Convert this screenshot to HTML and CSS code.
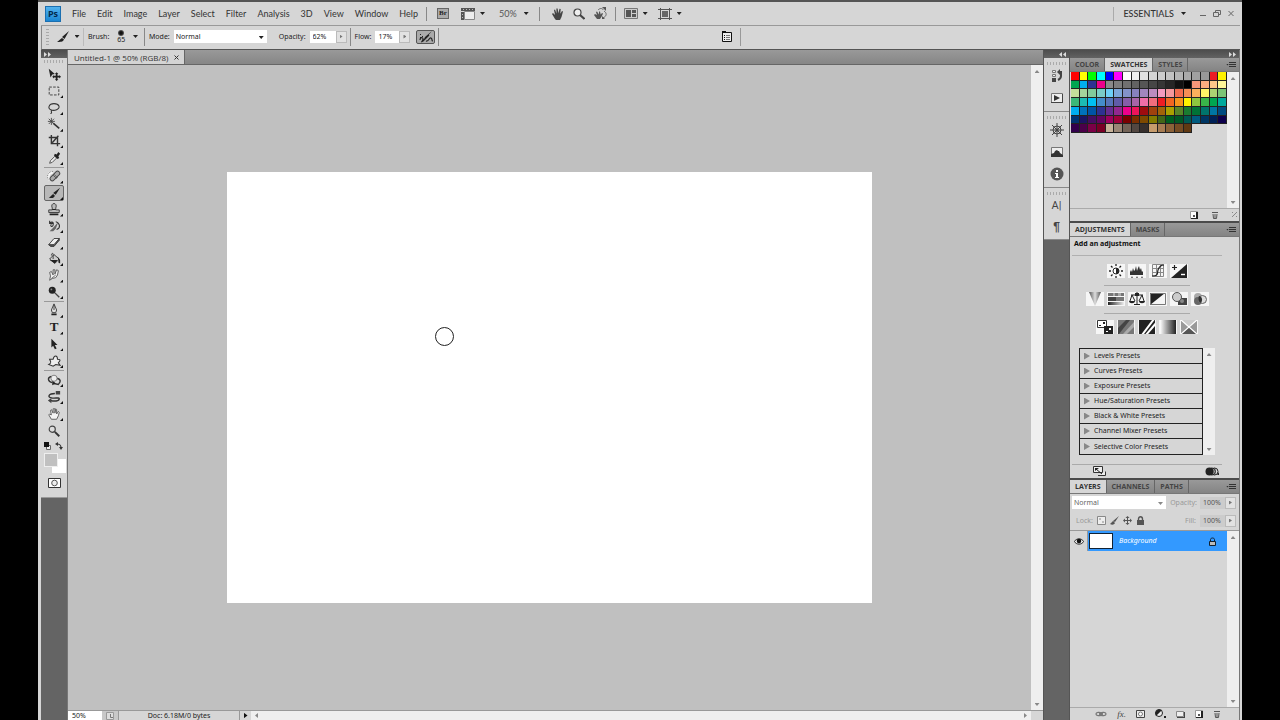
FILE: index.html
```html
<!DOCTYPE html>
<html lang="en">
<head>
<meta charset="utf-8">
<title>Untitled-1 @ 50% (RGB/8)</title>
<link rel="stylesheet" href="styles.css">
</head>
<body>
<div class="app">
  <header class="menubar">
    <span class="logo">Ps</span>
    <nav class="menus" aria-label="Main menu">
      <button>File</button><button>Edit</button><button>Image</button><button>Layer</button><button>Select</button><button>Filter</button><button>Analysis</button><button>3D</button><button>View</button><button>Window</button><button>Help</button>
    </nav>
    <div class="apptools">
      <button class="bridge" aria-label="Launch Bridge">Br</button>
      <button class="drop" aria-label="View extras"><svg width="14" height="12" viewBox="0 0 14 12"><path fill="#eee" stroke="#888" d="M3.500 3.500h10v8h-10z"/><path fill="#555" d="M0 0h14v3H0zM0 4h3v8H0z"/><path fill="#bbb" d="M2 1h1v1H2zM5 1h1v1H5zM8 1h1v1H8zM11 1h1v1h-1zM1 6h1v1H1zM1 9h1v1H1z"/></svg><i class="caret"></i></button>
      <button class="drop zoomlevel">50%<i class="caret"></i></button>
    </div>
    <div class="apptools views">
      <button aria-label="Hand"><svg width="12" height="12" viewBox="0 0 12 12"><path fill="#444" d="M3 11 0 6l1-1 2 2L2 2l1-.6 1.500 4L4.400.6 5.600.4l.8 4.800L7.500.8l1.200.3-.4 4.600L10 3l1 .6L9.500 9 8 12H4z"/></svg></button>
      <button aria-label="Zoom"><svg width="12" height="12" viewBox="0 0 12 12"><circle cx="4.500" cy="4.500" r="3.500" fill="#eee" stroke="#444" stroke-width="1.200"/><path stroke="#444" stroke-width="2.200" d="m7 7 4.500 4"/></svg></button>
      <button aria-label="Rotate view"><svg width="13" height="13" viewBox="0 0 13 13"><path fill="#555" d="M3 12 0 8l1-1 2 1-1-3 1-.5 2 3 0-3 1 0 .7 3L8 6l1 .5L8 9l-2 3z"/><path fill="none" stroke="#666" d="M4 3C6 1 8 1 9.500 3M10 4c3 2 3 5-1 7"/><path fill="#555" d="M8 0h4v4zM8 9v3h3z"/></svg></button>
    </div>
    <div class="apptools arrange">
      <button class="drop" aria-label="Arrange documents"><svg width="14" height="11" viewBox="0 0 14 11"><path fill="#ccc" stroke="#777" d="M.5.5h13v10H.5z"/><path fill="#555" d="M2 2h5v7H2zM8 2h4v3H8zM8 6h4v3H8z"/></svg><i class="caret"></i></button>
      <button class="drop" aria-label="Screen mode"><svg width="14" height="12" viewBox="0 0 14 12"><path fill="#666" d="M4 3h6v6H4z"/><path fill="none" stroke="#555" d="M2.500 0v12M11.500 0v12M0 1.500h14M0 10.500h14"/></svg><i class="caret"></i></button>
    </div>
    <button class="drop workspace">ESSENTIALS<i class="caret"></i></button>
    <div class="winctl">
      <button aria-label="Minimize"><svg width="8" height="8" viewBox="0 0 8 8"><path stroke="#666" d="M1 5.500h6"/></svg></button>
      <button aria-label="Restore"><svg width="8" height="8" viewBox="0 0 8 8"><path fill="none" stroke="#666" d="M2.500 2V.5h5v4H6M.5 2.500h5v4h-5z"/></svg></button>
      <button aria-label="Close"><svg width="8" height="8" viewBox="0 0 8 8"><path stroke="#666" d="m1.500 1 5 5m0-5-5 5"/></svg></button>
    </div>
  </header>

  <section class="options" aria-label="Brush options">
    <i class="grip"></i>
    <button class="drop brushtool" aria-label="Brush tool presets"><svg width="13" height="12" viewBox="0 0 13 12"><path fill="#222" d="M12 0 7.500 8 5 6zM5 7l2 1.500C6 11 3 11 0 11c2-1 3-3 5-4z"/></svg><i class="caret"></i></button>
    <div class="opt brush"><span>Brush:</span><button class="tip" aria-label="Brush size"><i class="dot"></i>65</button><i class="caret"></i></div>
    <div class="opt mode"><label for="mode">Mode:</label><span class="pick"><select id="mode"><option>Normal</option></select></span></div>
    <div class="opt opacity"><label for="opacity">Opacity:</label><span class="num"><input id="opacity" value="62%"><button aria-label="Opacity slider"></button></span></div>
    <div class="opt flow"><label for="flow">Flow:</label><span class="num"><input id="flow" value="17%"><button aria-label="Flow slider"></button></span>
    <button class="air" aria-label="Airbrush"><svg width="16" height="12" viewBox="0 0 16 12"><path fill="none" stroke="#222" stroke-width="1.200" d="M2 9c0-3 3-3 3-1s-3 4 0 2l6-6M8 10c3 1 3-4 5-3s0 3 2 3"/><path fill="#222" d="M14 0 8 7 6 8l1-2zM2 3h1v1H2zM4 5h1v1H4zM2 6h1v1H2z"/></svg></button></div>
    <button class="palettes" aria-label="Toggle brushes panel"><svg width="11" height="11" viewBox="0 0 11 11"><path fill="#eee" stroke="#111" d="M.5 1.500h9v9h-9z"/><path fill="#111" d="M0 0h4v2H0zM2 4h1v1H2zM2 6h1v1H2zM2 8h1v1H2z"/><path stroke="#777" d="M4 4.500h4M4 6.500h4M4 8.500h4"/></svg></button>
  </section>

  <main class="body">
    <aside class="toolcol">
      <div class="colhead"><svg width="7" height="5" viewBox="0 0 7 5"><path fill="#ddd" d="M0 0l3 2.500L0 5zM4 0l3 2.500L4 5z"/></svg></div>
      <div class="tools">
        <i class="grip wide"></i>
        <div class="tgroup g6">
          <button class="plain" aria-label="Move"><svg viewBox="0 0 16 16"><path fill="#222" d="m2 2 7 6-3 .5L4 12zM11 6l2 2h-1v2h2V9l2 2-2 2v-1h-2v2h1l-2 2-2-2h1v-2H8v1l-2-2 2-2v1h2V8H9z"/></svg></button>
          <button aria-label="Marquee"><svg viewBox="0 0 16 16"><path fill="none" stroke="#333" stroke-dasharray="3 1.500" d="M2.500 3.500h11v9h-11z"/></svg></button>
          <button aria-label="Lasso"><svg viewBox="0 0 16 16"><path fill="none" stroke="#333" stroke-width="1.200" d="M5 10C0 9 2 3 8 3s8 5 3 7-7-1-6 2-1 2-1 2"/></svg></button>
          <button aria-label="Magic wand"><svg viewBox="0 0 16 16"><path stroke="#333" stroke-width="1.800" d="m7 7 7 6"/><path stroke="#444" d="M5 1v8M1 5h8M2 2l6 6M8 2 2 8"/></svg></button>
          <button aria-label="Crop"><svg viewBox="0 0 16 16"><path fill="none" stroke="#333" stroke-width="1.600" d="M5 1v10h10M2 4h10v10M6 10l7-8"/></svg></button>
          <button aria-label="Eyedropper"><svg viewBox="0 0 16 16"><path fill="#eee" stroke="#444" d="m3 14 1-3 5-5 2 2-5 5z"/><path fill="#222" d="m9 3 2 1 2-3 2 2-2 3 1 2-2 1-4-4z"/></svg></button>
        </div>
        <div class="tgroup g8">
          <button aria-label="Healing brush"><svg viewBox="0 0 16 16"><path fill="none" stroke="#f4f4f4" stroke-width="3" d="M7 4C2 3 0 9 3 13"/><path fill="none" stroke="#666" stroke-dasharray="1 1" d="M7 3C1 2-1 9 2 13"/><path stroke="#444" stroke-width="6" stroke-linecap="round" d="m6 11 6-6"/><path stroke="#aaa" stroke-width="4" stroke-linecap="round" d="m6 11 6-6"/><path stroke="#555" d="m7 7 4 4M8 6l4 4"/></svg></button>
          <button class="on" aria-label="Brush"><svg viewBox="0 0 16 16"><path fill="#222" d="m15 2-5 8-3-2zM7 9l2 2c-1 3-4 3-7 2 2 0 3-3 5-4z"/></svg></button>
          <button aria-label="Clone stamp"><svg viewBox="0 0 16 16"><path fill="#bbb" stroke="#333" d="M6 7c-3-7 7-7 4 0v2h4v3H2V9h4z"/><path fill="#222" d="M3 13h10v2H3zM6 8h4v1H6z"/></svg></button>
          <button aria-label="History brush"><svg viewBox="0 0 16 16"><path fill="#666" d="m13 3-3 8-3 3-4 0 4-4z"/><path fill="none" stroke="#333" stroke-width="1.200" d="M3 5c3-3 5-1 4 2s-4 1-2-1M3 2v3h4M10 3c5 2 6 7 1 9"/></svg></button>
          <button aria-label="Eraser"><svg viewBox="0 0 16 16"><path fill="#555" stroke="#333" d="m2 11 2 2h4l6-7V4z"/><path fill="#eee" stroke="#333" d="m2 11 6-7h6l-6 7z"/></svg></button>
          <button aria-label="Paint bucket"><svg viewBox="0 0 16 16"><path fill="#ccc" stroke="#333" d="m3 8 5-5 6 5-5 5z"/><path fill="none" stroke="#333" d="M7 8V2c-1-1-2 0-2 2"/><path fill="#222" d="m12 5 3 4v4l-2-1V9zM3 9h9l-3 4z"/></svg></button>
          <button aria-label="Smudge"><svg viewBox="0 0 16 16"><path fill="#eee" stroke="#555" d="M3 14 4 9 3 5l2-1 2 4V2h2v5l2-5 2 1-1 5-2 3-4 1z"/><path stroke="#666" d="m5 12 5-4"/></svg></button>
          <button aria-label="Burn"><svg viewBox="0 0 16 16"><circle cx="6" cy="6" r="4" fill="#222"/><circle cx="5" cy="5" r="1" fill="#888"/><path stroke="#444" stroke-width="1.600" d="m9 9 5 5"/></svg></button>
        </div>
        <div class="tgroup g4">
          <button aria-label="Pen"><svg viewBox="0 0 16 16"><path fill="#ddd" stroke="#333" d="M8 1 5 8l1 3h4l1-3zM8 2v6"/><path fill="#222" d="M5 12h6v2H5z"/></svg></button>
          <button class="type" aria-label="Type">T</button>
          <button aria-label="Path selection"><svg viewBox="0 0 16 16"><path fill="#222" d="m5 2 7 7-3 0 2 4-2 1-2-4-2 2z"/></svg></button>
          <button aria-label="Custom shape"><svg viewBox="0 0 16 16"><path fill="#eee" stroke="#333" stroke-width="1.200" d="M2 12c4-2 2-3 1-6l4 0c1-5 5-5 5 0 5 0 2 3 1 4l2 3-5-1-3 2z"/></svg></button>
        </div>
        <div class="tgroup g4 last">
          <button aria-label="3D rotate"><svg viewBox="0 0 16 16"><path fill="none" stroke="#333" stroke-width="1.600" d="M5 4C0 5 1 10 6 11M11 6c5 1 5 4 2 7l-5-1"/><path fill="#222" d="M6 8v6l4-2z"/><circle cx="8" cy="6" r="3.500" fill="#eee" stroke="#777"/></svg></button>
          <button aria-label="3D orbit"><svg viewBox="0 0 16 16"><path fill="none" stroke="#333" stroke-width="1.600" d="M9 4C2 4 0 8 5 9c4 1 9-1 9 1 0 3-6 3-10 2"/><path fill="#444" d="M10 1h5v4h-5zM5 9v6l-4-3z"/></svg></button>
          <button aria-label="Hand tool"><svg viewBox="0 0 16 16"><path fill="#f4f4f4" stroke="#555" d="M5 14 2 9l1-1 2 1-1-5 1-1 2 4V2h2v5l1-5 1 1v5l2-3 1 1-1 4-2 4z"/></svg></button>
          <button class="plain" aria-label="Zoom tool"><svg viewBox="0 0 16 16"><circle cx="6" cy="6" r="3.500" fill="#ddd" stroke="#444" stroke-width="1.300"/><path stroke="#333" stroke-width="2.200" d="m9 9 5 5"/></svg></button>
        </div>
        <div class="defaults"><svg width="7" height="8" viewBox="0 0 7 8"><path fill="#eee" stroke="#666" d="M2.500 3.500h4v4h-4z"/><path fill="#111" d="M0 0h5v5H0z"/></svg><svg width="8" height="8" viewBox="0 0 8 8"><path fill="none" stroke="#333" stroke-width="1.200" d="M2 2c3 0 4 1 4 4"/><path fill="#333" d="M3 0v4L0 2zM4 5h4L6 8z"/></svg></div>
        <div class="colors"><button class="fg" aria-label="Foreground color"></button><button class="bg" aria-label="Background color"></button></div>
        <button class="mask" aria-label="Quick mask"><svg width="13" height="10" viewBox="0 0 13 10"><path fill="#fff" stroke="#333" d="M.5.5h12v9H.5z"/><circle cx="6.500" cy="5" r="2.800" fill="#eee" stroke="#555"/></svg></button>
      </div>
    </aside>

    <section class="doc">
      <div class="doctabs"><div class="doctab">Untitled-1 @ 50% (RGB/8)<button aria-label="Close tab"><svg width="5" height="5" viewBox="0 0 5 5"><path stroke="#333" d="m.5.500 4 4m0-4-4 4"/></svg></button></div></div>
      <div class="view">
        <div class="stage"><div class="artboard"><i class="cursor"></i></div></div>
        <div class="vscroll"><i class="up"></i><i class="down"></i></div>
      </div>
      <footer class="status">
        <input aria-label="Zoom" value="50%">
        <span class="clock"><svg width="8" height="8" viewBox="0 0 8 8"><path fill="#ddd" stroke="#999" d="M.5.500h7v7h-7z"/><path fill="none" stroke="#777" d="M4.500 2v3.500H7"/></svg></span>
        <span class="info">Doc: 6.18M/0 bytes</span>
        <button class="more" aria-label="Status menu"></button>
        <div class="hscroll"><i class="lefta"></i><i class="righta"></i></div>
        <i class="corner"></i>
      </footer>
    </section>

    <aside class="dock">
      <div class="colhead end"><svg width="7" height="5" viewBox="0 0 7 5"><path fill="#ddd" d="M3 0 0 2.500 3 5zM7 0 4 2.500 7 5z"/></svg></div>
      <div class="dgroup"><i class="grip wide"></i>
        <button aria-label="History"><svg width="14" height="14" viewBox="0 0 14 14"><path fill="#eee" stroke="#777" d="M2.500 1.500h3v2h-3zM2.500 5.500h3v2h-3z"/><path fill="#444" d="M2 9h4v4H2z"/><path fill="none" stroke="#444" stroke-width="2" d="M8 3h3v4c0 2-1 3-3 4"/><path fill="#444" d="m7 3 3-3v6z"/></svg></button>
        <button aria-label="Actions"><svg width="14" height="14" viewBox="0 0 14 14"><path fill="#eee" stroke="#777" d="M1.500 2.500h11v9h-11z"/><path fill="#333" d="m4 4 6 3-6 3z"/><path stroke="#444" d="M1 11.500h12M12.500 3v9"/></svg></button></div>
      <div class="dgroup"><i class="grip wide"></i>
        <button aria-label="Navigator"><svg width="14" height="14" viewBox="0 0 14 14"><circle cx="7" cy="7" r="4" fill="none" stroke="#444"/><circle cx="7" cy="7" r="1.500" fill="#444"/><path stroke="#444" d="M7 0v14M0 7h14M2 2l10 10M12 2 2 12"/></svg></button>
        <button aria-label="Histogram"><svg width="14" height="14" viewBox="0 0 14 14"><path fill="#eee" stroke="#777" d="M1.500 2.500h11v9h-11z"/><path fill="#333" d="M1 12V9l3-1 1-2 2-1 1 1 1 0 1 2 3 2v2z"/></svg></button>
        <button aria-label="Info"><svg width="14" height="14" viewBox="0 0 14 14"><circle cx="7" cy="7" r="6.500" fill="#555"/><path fill="#fff" d="M6 3h2v2H6zM5 6h3v4h1v1H5v-1h1V7H5z"/></svg></button></div>
      <div class="dgroup"><i class="grip wide"></i>
        <button class="char" aria-label="Character">A|</button>
        <button class="para" aria-label="Paragraph">¶</button></div>
    </aside>

    <aside class="panels">
      <div class="colhead end"><svg width="7" height="5" viewBox="0 0 7 5"><path fill="#ddd" d="M0 0l3 2.500L0 5zM4 0l3 2.500L4 5z"/></svg></div>
      <section class="panel swatchpanel">
        <div class="tabs"><button>COLOR</button><button class="sel">SWATCHES</button><button>STYLES</button><i class="pmenu"></i></div>
        <div class="scrolled"><div class="swatches" id="swatches"></div><div class="vscroll"><i class="up"></i><i class="down"></i></div></div>
        <div class="pfoot"><button aria-label="New swatch"><svg width="8" height="8" viewBox="0 0 8 8"><path fill="#fff" stroke="#999" d="M.5.500h7v7h-7z"/><path fill="#222" d="M6 1h2v7H1V7h5z"/><path fill="#555" d="M3 4h2v2H3z"/></svg></button><button aria-label="Delete swatch"><svg width="8" height="8" viewBox="0 0 8 8"><path fill="none" stroke="#555" d="M1 1.500h6M2 3l.5 4.500h3L6 3M4 3v4"/></svg></button><i class="resize"></i></div>
      </section>

      <section class="panel adjust">
        <div class="tabs"><button class="sel">ADJUSTMENTS</button><button>MASKS</button><i class="pmenu"></i></div>
        <div class="adjbody">
          <h2>Add an adjustment</h2>
          <div class="icons first">
            <button aria-label="Brightness/Contrast"><svg viewBox="0 0 16 14"><circle cx="8" cy="7" r="3" fill="#fff" stroke="#222"/><path fill="#222" d="M8 4a3 3 0 0 1 0 6z"/><path stroke="#222" stroke-width="1.300" d="M8 0v2M8 12v2M1 7h2M13 7h2M3 2l1.500 1.500M11.500 10.500 13 12M13 2l-1.500 1.500M3 12l1.500-1.500"/></svg></button>
            <button aria-label="Levels"><svg viewBox="0 0 16 14"><path fill="#333" d="M1 11V8l1-2 1 2 1-4 1 3 1-1 1-4 1 5 1-3 1-2 1 4 1-2 1 4 1-1v4z"/><path fill="#555" d="m3 12 1 2H2zM8 12l1 2H7zM13 12l1 2h-2z"/></svg></button>
            <button aria-label="Curves"><svg viewBox="0 0 16 14"><path fill="none" stroke="#888" d="M2.500.500h11v12h-11zM6.500 0v13M10.500 0v13M2 4.500h12M2 8.500h12"/><path fill="none" stroke="#222" stroke-width="1.200" d="M2 12c7 0 5-3 6-6s2-5 6-5"/></svg></button>
            <button aria-label="Exposure"><svg viewBox="0 0 16 14"><path fill="#222" d="M16 0v14H0z"/><path stroke="#222" stroke-width="1.200" d="M1 3.500h5M3.500 1v5"/><path stroke="#fff" stroke-width="1.400" d="M10 10.500h4"/></svg></button>
          </div>
          <div class="icons">
            <button aria-label="Vibrance"><svg viewBox="0 0 16 14"><defs><linearGradient id="vb"><stop stop-color="#555"/><stop offset=".5" stop-color="#ddd"/><stop offset="1" stop-color="#555"/></linearGradient></defs><path fill="url(#vb)" d="M2 0h12L8 14z"/></svg></button>
            <button aria-label="Hue/Saturation"><svg viewBox="0 0 16 14"><defs><linearGradient id="hs"><stop stop-color="#222"/><stop offset="1" stop-color="#eee"/></linearGradient></defs><path fill="#777" d="M0 1h16v3H0z"/><path fill="#444" d="M0 5h8v4H0z"/><path fill="#777" d="M8 5h8v4H8z"/><path fill="url(#hs)" d="M0 10h16v3H0z"/><path fill="#aaa" d="M5 1h2v3H5zM10 1h3v3h-3z"/></svg></button>
            <button aria-label="Color Balance"><svg viewBox="0 0 16 14"><path fill="none" stroke="#222" d="M8 0v12M2 3h12M3 3 1 9M3 3l3 6M13 3l-3 6M13 3l2 6M5 12.500h6"/><path fill="#222" d="M0 9h6c0 3-6 3-6 0zM10 9h6c0 3-6 3-6 0zM6 1h4v3H6z"/></svg></button>
            <button aria-label="Black &amp; White"><svg viewBox="0 0 16 14"><path fill="#222" d="M0 1h15L0 13z"/><path fill="none" stroke="#777" d="M.5 1.500h15v11H.5z"/></svg></button>
            <button aria-label="Photo Filter"><svg viewBox="0 0 16 14"><path fill="#444" d="M7 6h9v7H7z"/><circle cx="11" cy="9" r="2" fill="#888"/><circle cx="6" cy="5" r="4.500" fill="#ccc" stroke="#555"/></svg></button>
            <button aria-label="Channel Mixer"><svg viewBox="0 0 16 14"><circle cx="6" cy="5" r="4" fill="#aaa"/><circle cx="6" cy="9" r="4" fill="#666"/><circle cx="10.500" cy="7.500" r="4" fill="#ddd" stroke="#666"/><path fill="#333" d="M7 4c3 0 4 4 2 7-3-1-3-5-2-7z"/></svg></button>
          </div>
          <div class="icons">
            <button aria-label="Invert"><svg viewBox="0 0 16 14"><path fill="#fff" stroke="#333" d="M.5.500h9v7h-9z"/><path fill="#222" d="M2 5h2v1H2zM6 2h2v2H6zM7 6h9v8H7z"/><path fill="#fff" d="M9 11h2v1H9zM12 8h2v2h-2z"/></svg></button>
            <button aria-label="Posterize"><svg viewBox="0 0 16 14"><path fill="#777" d="M0 0h16v14H0z"/><path fill="#444" d="M0 14V8l8-8h4L1 14z"/><path fill="#aaa" d="M5 14 16 2v5l-7 7z"/></svg></button>
            <button aria-label="Threshold"><svg viewBox="0 0 16 14"><path fill="#222" d="M0 0h16v14H0z"/><path stroke="#fff" stroke-width="2" d="M3 15 15-1M7 15 18 2"/></svg></button>
            <button aria-label="Gradient Map"><svg viewBox="0 0 16 14"><defs><linearGradient id="gm"><stop stop-color="#fff"/><stop offset="1" stop-color="#222"/></linearGradient></defs><path fill="url(#gm)" d="M0 0h16v14H0z"/></svg></button>
            <button aria-label="Selective Color"><svg viewBox="0 0 16 14"><path fill="#ccc" d="M0 0h16v14H0z"/><path fill="#555" d="m8 7 8 7H0z"/><path fill="#999" d="M16 0v14L8 7zM0 0v14l8-7z"/><path stroke="#fff" stroke-width="1.300" d="m0 0 16 14M16 0 0 14"/></svg></button>
          </div>
          <div class="presets">
            <ul><li>Levels Presets</li><li>Curves Presets</li><li>Exposure Presets</li><li>Hue/Saturation Presets</li><li>Black &amp; White Presets</li><li>Channel Mixer Presets</li><li>Selective Color Presets</li></ul>
            <div class="vscroll"><i class="up"></i><i class="down"></i></div>
          </div>
          <div class="adjfoot"><button aria-label="Expand view"><svg width="13" height="10" viewBox="0 0 13 10"><path fill="#eee" stroke="#333" d="M.5.500h9v6h-9zM5 9.500h7.500v-4"/><path stroke="#222" d="m3 3 6 5"/><path fill="#222" d="M2 2h4L2 5z"/></svg></button><button aria-label="Clip to layer"><svg width="14" height="9" viewBox="0 0 14 9"><circle cx="9.500" cy="4.500" r="3.500" fill="#ddd" stroke="#222"/><circle cx="7" cy="4.500" r="3.500" fill="#999" stroke="#222"/><circle cx="4.500" cy="4.500" r="4" fill="#222"/><path fill="#222" d="m12 8 2-3v3z"/></svg></button></div>
        </div>
      </section>

      <section class="panel layers">
        <div class="tabs"><button class="sel">LAYERS</button><button>CHANNELS</button><button>PATHS</button><i class="pmenu"></i></div>
        <div class="lrow"><span class="pick dim"><select aria-label="Blend mode"><option>Normal</option></select></span><label for="lo">Opacity:</label><span class="num"><input id="lo" value="100%"><button aria-label="Layer opacity slider"></button></span></div>
        <div class="lrow lock"><span>Lock:</span>
          <button aria-label="Lock transparency"><svg width="9" height="9" viewBox="0 0 9 9"><path fill="#eee" stroke="#888" d="M.5.500h8v8h-8z"/><path fill="#bbb" d="M2 2h2v2H2zM5 5h2v2H5z"/></svg></button>
          <button aria-label="Lock pixels"><svg width="9" height="9" viewBox="0 0 9 9"><path fill="#555" d="M9 0 5 6 3 5zM3 5l2 2C4 9 2 9 0 8z"/></svg></button>
          <button aria-label="Lock position"><svg width="9" height="9" viewBox="0 0 9 9"><path stroke="#555" d="M4.500 1v7M1 4.500h7"/><path fill="#555" d="m4.500 0 2 2h-4zM4.500 9l2-2h-4zM0 4.500l2-2v4zM9 4.500l-2-2v4z"/></svg></button>
          <button aria-label="Lock all"><svg width="9" height="9" viewBox="0 0 9 9"><path fill="none" stroke="#555" stroke-width="1.400" d="M2.500 4V3c0-3 4-3 4 0v1"/><path fill="#555" d="M1 4h7v5H1z"/></svg></button>
          <label for="lf">Fill:</label><span class="num"><input id="lf" value="100%"><button aria-label="Fill slider"></button></span></div>
        <div class="scrolled llist">
          <div class="list"><div class="layer"><button class="eye" aria-label="Toggle visibility"><svg width="10" height="8" viewBox="0 0 10 8"><path fill="#eee" stroke="#222" d="M.5 4.500C2 1 8 1 9.500 4.500 8 8 2 8 .5 4.500z"/><circle cx="5" cy="4" r="2.300" fill="#111"/></svg></button><span class="thumb"></span><em>Background</em><svg class="lk" width="7" height="9" viewBox="0 0 7 9"><path fill="none" stroke="#123" d="M1.500 4V2.500c0-2 4-2 4 0V4"/><path fill="#bbb" stroke="#123" d="M.5 4.500h6v4h-6z"/></svg></div></div>
          <div class="vscroll"><i class="up"></i><i class="down"></i></div>
        </div>
        <div class="pfoot lfoot">
          <button aria-label="Link layers"><svg width="12" height="8" viewBox="0 0 12 8"><path fill="none" stroke="#777" stroke-width="1.300" d="M6 3C5 2 1 2 1 4s4 2 5 1M6 3c1-1 5-1 5 1s-4 2-5 1M4 4h4"/></svg></button>
          <button class="fx">fx.</button>
          <button aria-label="Add mask"><svg width="9" height="8" viewBox="0 0 9 8"><path fill="#eee" stroke="#444" d="M.5.500h8v7h-8z"/><circle cx="4.500" cy="4" r="2" fill="#fff" stroke="#777"/></svg></button>
          <button aria-label="New adjustment layer"><svg width="11" height="9" viewBox="0 0 11 9"><circle cx="4" cy="4" r="3.500" fill="#eee" stroke="#222"/><path fill="#222" d="M1 7 7 1C2-1-1 3 1 7zM9 7h2v2H9z"/></svg></button>
          <button aria-label="New group"><svg width="9" height="8" viewBox="0 0 9 8"><path fill="#eee" stroke="#888" d="M.5 1.500h7v5h-7z"/><path stroke="#444" d="M1 7.500h8M8.500 2v5"/></svg></button>
          <button aria-label="New layer"><svg width="8" height="8" viewBox="0 0 8 8"><path fill="#fff" stroke="#999" d="M.5.500h7v7h-7z"/><path fill="#222" d="M6 1h2v7H1V7h5z"/><path fill="#555" d="M3 4h2v2H3z"/></svg></button>
          <button aria-label="Delete layer"><svg width="8" height="8" viewBox="0 0 8 8"><path fill="none" stroke="#555" d="M1 1.500h6M2 3l.5 4.500h3L6 3M4 3v4"/></svg></button>
        </div>
      </section>
    </aside>
  </main>
</div>
<script src="swatches.js"></script>
</body>
</html>
```

FILE: styles.css
```css
* { box-sizing: border-box; }
body {
  margin: 0;
  background: #000;
  color: #222;
  font: 7px/10px "Noto Sans", "DejaVu Sans", sans-serif;
}
button, input, select {
  margin: 0;
  padding: 0;
  border: 0;
  background: none;
  color: inherit;
  font: inherit;
  border-radius: 0;
}
button { display: flex; align-items: center; justify-content: center; }
svg { display: block; flex: none; }
input { min-width: 0; background: #fff; }
ul { margin: 0; padding: 0; list-style: none; }
label, span { white-space: nowrap; }

.app {
  display: flex;
  flex-direction: column;
  height: 100vh;
  margin: 0 38px;
  padding: 0 2px 0 3px;
  border-top: 2px solid #555;
  background: #d6d6d6;
  overflow: hidden;
}

.caret, .num button::after, .pick::after {
  content: "";
  flex: none;
  width: 5px;
  height: 3px;
  background: #222;
  clip-path: polygon(0 0, 100% 0, 50% 100%);
}
.grip { flex: none; width: 3px; height: 16px; background: repeating-linear-gradient(#aaa 0 1px, transparent 1px 3px); }
.grip.wide { display: block; width: 20px; height: 3px; margin: 2px auto; background: repeating-linear-gradient(90deg, #aaa 0 1px, transparent 1px 3px); }
.drop { gap: 5px; }

/* menu bar */
.menubar { display: flex; flex: none; align-items: center; height: 24px; padding: 0 4px; border-bottom: 1px solid #999; }
.logo {
  width: 16px;
  height: 16px;
  border: 1px solid #1b6fb0;
  background: linear-gradient(#52b2ee, #1b86d2);
  color: #032a4d;
  font: bold 9px/13px "Open Sans", sans-serif;
  text-align: center;
}
.menus { display: flex; gap: 11px; margin: 0 8px 0 11px; }
.menus button, .zoomlevel, .workspace { color: #333; font: 9px/14px Lato, "Open Sans", sans-serif; }
.apptools { display: flex; align-items: center; gap: 12px; height: 14px; padding: 0 10px; border-left: 1px solid #888; }
.views { gap: 9px; padding: 0 8px 0 12px; }
.arrange { gap: 10px; padding: 0 8px; }
.bridge { width: 12px; height: 11px; border: 1px solid #666; background: #aaa; color: #222; font: bold 7px/9px "Liberation Serif", serif; }
.zoomlevel { gap: 7px; padding-left: 2px; color: #555; }
.workspace { gap: 7px; height: 14px; margin-left: auto; padding: 0 13px 0 9px; border-left: 1px solid #aaa; font-weight: 500; }
.winctl { display: flex; gap: 6px; margin-right: 1px; }

/* options bar */
.options { display: flex; flex: none; align-items: center; height: 24px; padding: 0 0 2px 4px; border-bottom: 1px solid #555; border-left: 1px solid #888; }
.brushtool { width: 34px; padding-left: 4px; }
.opt { display: flex; align-items: center; height: 18px; border-left: 1px solid #bbb; padding-left: 4px; }
.brush { width: 61px; padding-right: 6px; }
.tip { flex-direction: column; flex: 1; font-size: 7px; line-height: 8px; }
.dot { width: 6px; height: 6px; margin-top: 1px; border-radius: 50%; background: radial-gradient(#111 30%, #999); }
.mode { gap: 4px; border-color: #888; }
.pick { position: relative; display: flex; width: 93px; height: 13px; background: #fff; }
.pick select { width: 100%; padding-left: 2px; appearance: none; }
.pick::after { position: absolute; right: 3px; top: 6px; }
.opacity { gap: 4px; border: 0; padding: 0 3px 0 12px; }
.num { display: flex; height: 12px; background: #fff; }
.num input { width: 26px; padding-left: 3px; }
.num button { width: 11px; border: 1px solid #bbb; background: #e2e2e2; }
.num button::after { width: 3px; height: 4px; background: #777; clip-path: polygon(0 0, 100% 50%, 0 100%); }
.flow { gap: 4px; border-color: #888; padding-right: 3px; border-right: 1px solid #888; }
.flow input { width: 24px; }
.air { width: 19px; height: 14px; margin-left: 2px; border: 1px solid #555; border-radius: 2px; background: #aaa; }
.palettes { height: 18px; margin-left: 283px; padding-right: 7px; border-right: 1px solid #999; }

/* columns */
.body { display: flex; flex: 1; min-height: 0; background: #646464; }
.colhead { display: flex; flex: none; align-items: center; height: 8px; padding: 0 3px; background: linear-gradient(#4d4d4d, #626262); }
.colhead.end { justify-content: flex-end; }
.toolcol { flex: none; width: 27px; border-right: 1px solid #777; }
.tools { height: 440px; background: #d6d6d6; border-bottom: 1px solid #999; overflow: hidden; }
.tgroup { display: grid; grid-auto-rows: 1fr; margin: 0 3px; padding-bottom: 1px; border-bottom: 1px solid #999; }
.g6 { height: 103px; padding-top: 1px; }
.g8 { height: 134px; }
.g4 { height: 69px; }
.last { border: 0; }
.tgroup button { position: relative; border: 1px solid transparent; border-radius: 2px; }
.tgroup button::after { content: ""; position: absolute; right: 0; bottom: 0; width: 3px; height: 3px; background: #111; clip-path: polygon(100% 0, 100% 100%, 0 100%); }
.tgroup .plain::after { display: none; }
.tgroup svg { width: 14px; height: 14px; }
.tgroup .on { border-color: #666; background: #b8b8b8; }
.type { font: bold 13px/14px "Liberation Serif", serif; }
.defaults { display: flex; justify-content: space-between; padding: 0 4px 0 3px; margin-top: 2px; }
.colors { display: grid; width: 22px; margin: 3px 0 0 3px; }
.colors button { grid-area: 1 / 1; }
.fg { z-index: 1; width: 14px; height: 14px; border: 1px solid #eee; background: #c0c0c0; }
.bg { justify-self: end; align-self: end; width: 14px; height: 14px; margin-top: 6px; background: #fff; }
.mask { margin: 5px auto 0; }

/* document */
.doc { display: flex; flex: 1; flex-direction: column; min-width: 0; border-right: 1px solid #555; }
.doctabs { display: flex; flex: none; height: 15px; border-bottom: 1px solid #666; background: linear-gradient(#999, #868686); }
.doctab { display: flex; align-items: center; gap: 6px; padding: 0 5px 0 6px; border-right: 1px solid #666; background: #d4d4d4; color: #333; font: 8px/13px "Open Sans", sans-serif; white-space: nowrap; }
.view { display: flex; flex: 1; min-height: 0; }
.stage { display: flex; flex: 1; align-items: center; justify-content: center; background: #c0c0c0; }
.artboard { position: relative; width: 67%; aspect-ratio: 3 / 2; background: #fff; }
.cursor { position: absolute; left: 33.7%; top: 38%; width: 19px; height: 19px; margin: -9px; border: 1px solid #222; border-radius: 50%; }
.vscroll { display: flex; flex: none; flex-direction: column; justify-content: space-between; align-items: center; width: 12px; padding: 5px 0 4px; background: #efefef; }
.up, .down { width: 5px; height: 3px; background: #888; }
.up { clip-path: polygon(50% 0, 100% 100%, 0 100%); }
.down { clip-path: polygon(0 0, 100% 0, 50% 100%); }
.status { display: flex; flex: none; height: 10px; border-top: 1px solid #999; background: #d6d6d6; line-height: 9px; }
.status input { width: 34px; height: 9px; padding-left: 4px; }
.clock { width: 16px; padding: 1px 4px; background: #c8c8c8; }
.info { width: 122px; border: solid #999; border-width: 0 1px; text-align: center; }
.more { width: 11px; }
.more::after, .lefta, .righta { content: ""; width: 4px; height: 6px; background: #111; clip-path: polygon(0 0, 100% 50%, 0 100%); }
.hscroll { display: flex; flex: 1; align-items: center; justify-content: space-between; padding: 0 4px; background: #efefef; }
.lefta, .righta { width: 3px; height: 5px; background: #888; }
.lefta { clip-path: polygon(100% 0, 0 50%, 100% 100%); }
.corner { width: 12px; }

/* collapsed panels */
.dock { flex: none; width: 26px; border-right: 1px solid #555; }
.dgroup { padding: 3px 0 2px; border-bottom: 1px solid #888; background: #d6d6d6; }
.dgroup button { width: 100%; height: 22px; color: #444; }
.dgroup:last-child button { height: 21px; }
.dgroup .grip { margin: 1px auto 0; }
.dgroup .char { font: 11px/14px Roboto, sans-serif; }
.dgroup .para { font: bold 12px/14px "Liberation Sans", sans-serif; }

/* panels */
.panels { display: flex; flex: none; flex-direction: column; width: 170px; border-right: 1px solid #777; }
.panel { display: flex; flex-direction: column; flex: none; background: #d6d6d6; border-bottom: 2px solid #4b4b4b; }
.tabs { display: flex; flex: none; align-items: stretch; height: 14px; border-bottom: 1px solid #777; background: linear-gradient(#999, #848484); }
.tabs button { padding: 0 5px; border-right: 1px solid #666; color: #444; font: bold 7px/12px "Open Sans", sans-serif; }
.tabs .sel { background: #d6d6d6; color: #333; }
.pmenu { display: flex; align-items: center; margin: 0 3px 0 auto; }
.pmenu::before { content: ""; width: 3px; height: 2px; background: #333; clip-path: polygon(0 0, 100% 0, 50% 100%); }
.pmenu::after { content: ""; width: 7px; height: 5px; background: repeating-linear-gradient(#333 0 1px, transparent 1px 2px); }
.scrolled { display: flex; flex: 1; min-height: 0; }
.swatchpanel { height: 165px; }
.swatches { flex: 1; align-self: flex-start; display: grid; grid-template-columns: repeat(18, 1fr); grid-auto-rows: 1fr; height: 61px; margin-left: 1px; }
.swatches i { border: solid #222; border-width: 0 1px 1px 0; }
.pfoot { display: flex; flex: none; justify-content: flex-end; align-items: center; gap: 13px; height: 13px; padding: 0 2px 1px 0; border-top: 1px solid #aaa; }
.resize { width: 5px; height: 5px; background: repeating-linear-gradient(135deg, #888 0 1px, transparent 1px 3px); }
.adjust { height: 257px; }
.adjbody { margin: 0 17px 0 2px; }
h2 { margin: 0; padding: 1px 2px 6px; border-bottom: 1px solid #b0b0b0; font: bold 7px/11px "Noto Sans", sans-serif; color: #111; }
.icons { position: relative; display: flex; justify-content: center; align-items: center; gap: 3px; width: 128px; height: 28px; margin: 0 auto; }
.icons.first { height: 29px; }
.icons + .icons::before { content: ""; position: absolute; top: 0; left: 21px; right: 21px; border-top: 1px solid #aaa; }
.icons button { width: 18px; height: 14px; background: #f6f6f6; }
.icons svg { width: 16px; height: 14px; }
.presets { display: flex; margin: 7px 7px 9px; }
.presets ul { flex: 1; border: 1px solid #222; }
.presets li { display: flex; align-items: center; height: 15px; padding-left: 4px; gap: 4px; border-bottom: 1px solid #222; }
.presets li:last-child { border: 0; }
.presets li::before { content: ""; width: 6px; height: 7px; background: #888; clip-path: polygon(0 0, 100% 50%, 0 100%); }
.adjfoot { display: flex; justify-content: space-between; padding: 1px 3px 0 21px; border-top: 1px solid #aaa; }
.layers { flex: 1; min-height: 0; border: 0; }
.lrow { display: flex; flex: none; align-items: center; height: 17px; padding: 0 3px 0 2px; color: #999; }
.lrow .pick { width: 94px; margin-right: auto; color: #666; }
.lrow .pick::after { background: #888; }
.lrow label { margin-right: 3px; }
.lrow input { width: 25px; background: #ccc; color: #555; }
.lrow.lock { gap: 4px; height: 19px; padding-left: 6px; }
.lock label { margin: 0 0 0 auto; }
.llist { border-top: 1px solid #999; }
.list { flex: 1; }
.layer { display: flex; align-items: center; height: 20px; background: #3399ff; color: #fff; }
.eye { width: 18px; height: 20px; border-right: 1px solid #999; background: #d6d6d6; }
.thumb { width: 24px; height: 16px; margin: 0 6px 0 1px; border: 1px solid #123; background: #fff; }
.lk { margin: 0 11px 0 auto; }
.lfoot { gap: 10px; padding-right: 18px; }
.fx { color: #444; font: italic 9px/10px "Liberation Serif", serif; }
```

FILE: swatches.js
```js
const rows = [
  "ff0000 ffff00 00ff00 00ffff 0000ff ff00ff ffffff eeeeee e0e0e0 d5d5d5 cccccc c2c2c2 b5b5b5 aaaaaa a0a0a0 999999 ed1c24 fff200",
  "00a651 00aeef 2e3192 ec008c 898989 7d7d7d 707070 626262 555555 464646 363636 262626 111111 000000 f7977a f9ad81 fdc689 fff799",
  "c4df9b a3d39c 82ca9c 7accc8 6dcff6 7da7d9 8393ca 8781bd a186be bd8cbf f49ac1 f5989d f26c4f f68e56 fbaf5d fff568 acd373 7cc576",
  "3cb878 1cbbb4 00bff3 448ccb 5674b9 605ca8 855fa8 a864a8 f06eaa f26d7d ed1c24 f26522 f7941d fff200 8dc63f 39b54a 00a651 00a99d",
  "00aeef 0072bc 0054a6 2e3192 662d91 92278f ec008c ed145b 9e0b0f a0410d a36209 aba000 598527 1a7b30 007236 00746b 0076a3 004b80",
  "003471 1b1464 440e62 630460 9e005d 9e0039 790000 7b2e00 7d4900 827b00 406618 005e20 005826 005952 005b7f 003663 002157 0d004c",
  "32004b 4b0049 7b0046 7a0026 c7b299 998675 736357 534741 362f2d c69c6d a67c52 8c6239 754c24 603913"
];
const grid = document.getElementById("swatches");
rows.join(" ").split(" ").forEach(hex => {
  const cell = document.createElement("i");
  cell.style.background = "#" + hex;
  grid.append(cell);
});
```
